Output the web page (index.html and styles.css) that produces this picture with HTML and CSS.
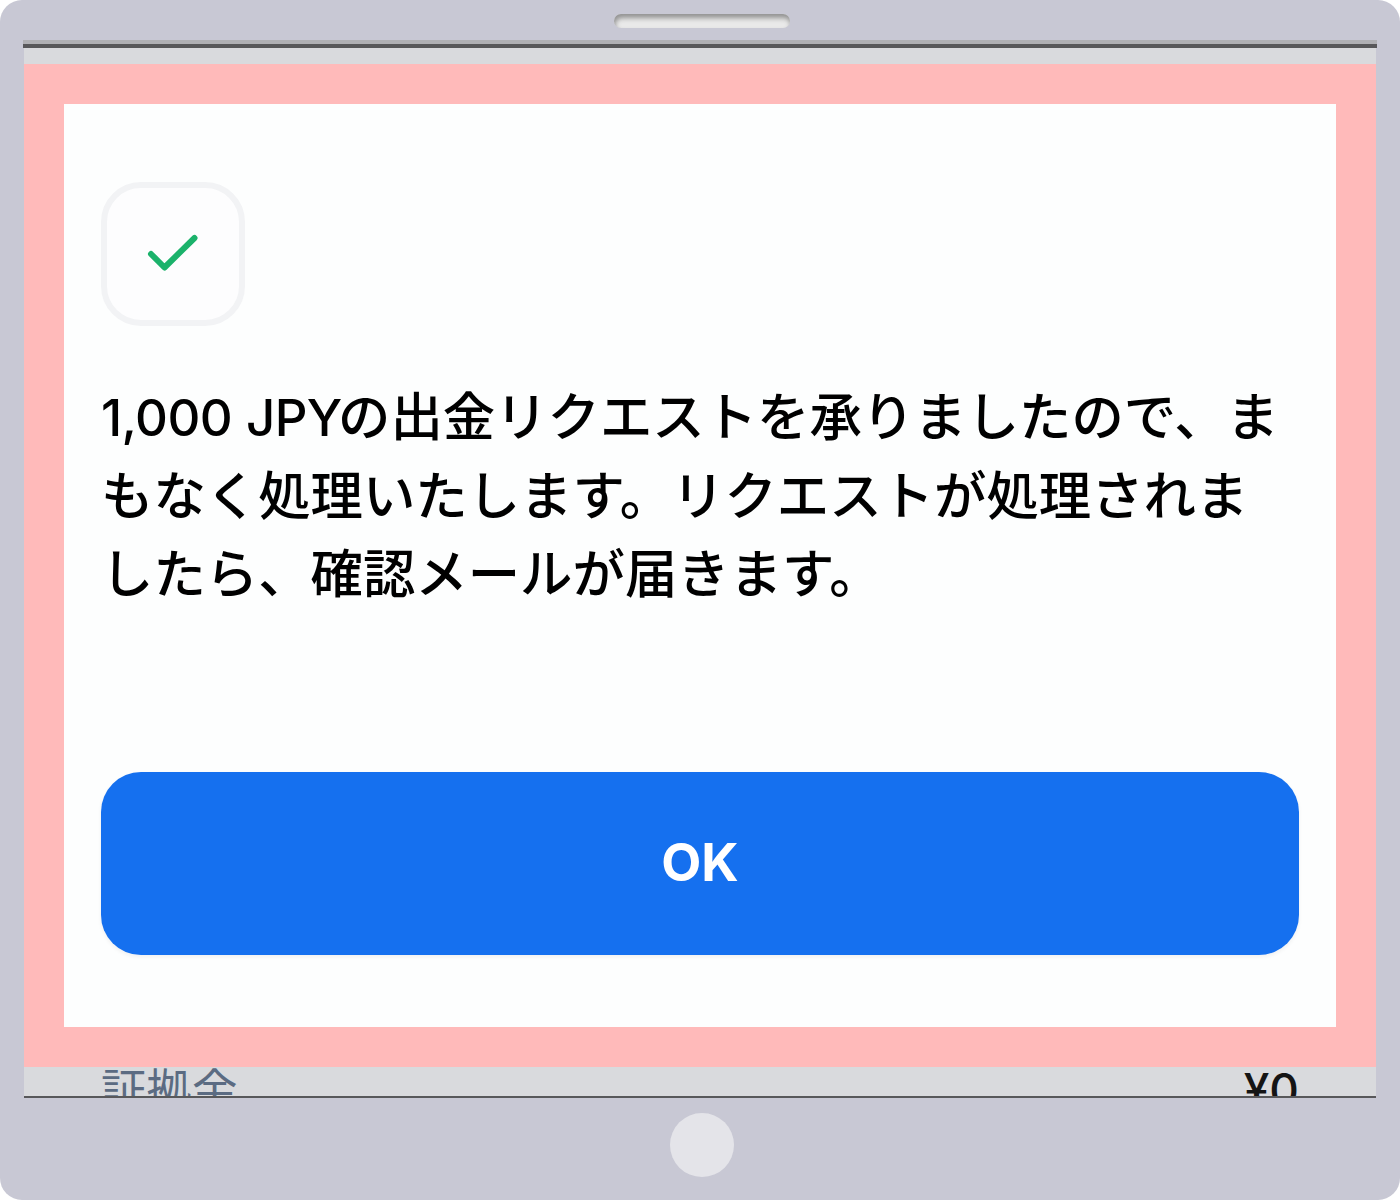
FILE: index.html
```html
<!DOCTYPE html>
<html lang="ja">
<head>
    <meta charset="UTF-8">
    <meta name="viewport" content="width=device-width, initial-scale=1.0">
    <title>出金リクエスト</title>
    <link rel="stylesheet" href="styles.css">
</head>
<body>
    <div class="device">
        <div class="device-top">
            <div class="speaker"></div>
        </div>
        <div class="screen-edge"></div>

        <main class="screen">
            <section class="dialog">
                <div class="status-icon">
                    <svg width="52" height="40" viewBox="0 0 52 40" fill="none" stroke="#1bb26b" stroke-width="6" stroke-linecap="round" stroke-linejoin="round">
                        <path d="M4 20L17.5 33.5L47.5 4"/>
                    </svg>
                </div>
                <p class="message">
                    <span class="line"><span class="amount">1,000</span><span class="currency">JPY</span>の出金リクエストを承りましたので、ま</span>
                    <span class="line">もなく処理いたします。リクエストが処理されま</span>
                    <span class="line">したら、確認メールが届きます。</span>
                </p>
                <button class="ok-button" type="button">OK</button>
            </section>

            <div class="balance-row">
                <span class="balance-label">証拠金</span>
                <span class="balance-value">¥0</span>
            </div>
        </main>

        <div class="device-bottom">
            <div class="home-button"></div>
        </div>
    </div>
</body>
</html>
```

FILE: styles.css
```css
* {
    margin: 0;
    padding: 0;
    box-sizing: border-box;
}

body {
    font-family: "Noto Sans CJK JP", sans-serif;
    background-color: white;
}

.device {
    display: flex;
    flex-direction: column;
    width: 1400px;
    height: 1200px;
    border-radius: 22px;
    background-color: #c8c8d4;
    overflow: hidden;
}

.device-top {
    display: flex;
    justify-content: center;
    height: 40px;
    padding: 14px 0 0 4px;
}

.speaker {
    width: 176px;
    height: 14px;
    border-radius: 7px;
    background-color: #e9e9e9;
    box-shadow: inset 1px 4px 5px #929292;
}

.screen-edge {
    height: 8px;
    margin: 0 23px;
    background-color: #58585a;
    border-top: 4px solid #b0b0b4;
}

.screen {
    height: 1050px;
    margin: 0 24px;
    padding-top: 16px;
    background-color: #d9dadd;
    border-bottom: 2px solid #58585a;
    overflow: hidden;
}

.dialog {
    height: 1003px;
    padding: 78px 37px 0;
    border: 40px solid #ffbaba;
    background-color: #fdfefe;
}

.status-icon {
    display: flex;
    align-items: center;
    justify-content: center;
    width: 144px;
    height: 144px;
    border: 6px solid #f2f3f5;
    border-radius: 40px;
    background-color: #fdfdfe;
}

.message {
    margin-top: 48px;
    font-size: 52.4px;
    font-weight: 500;
    line-height: 78.5px;
    color: #000;
    white-space: nowrap;
}

.line {
    display: block;
    height: 78.5px;
}

.amount,
.currency {
    display: inline-block;
    font-family: Inter, "Open Sans", sans-serif;
    font-size: 51px;
    line-height: 1;
    letter-spacing: -0.6px;
}

.amount {
    width: 145px;
}

.currency {
    width: 92px;
}

.ok-button {
    display: block;
    width: 100%;
    height: 183.5px;
    margin-top: 162px;
    padding-bottom: 2px;
    border: none;
    border-radius: 40px;
    background-color: #1570ef;
    box-shadow: 0 2px 4px rgba(16, 24, 40, 0.06);
    color: white;
    font-family: Inter, "Open Sans", sans-serif;
    font-size: 52px;
    font-weight: 700;
}

.balance-row {
    display: flex;
    justify-content: space-between;
    padding: 0 77px;
}

.balance-label {
    font-size: 45.5px;
    line-height: 40px;
    color: #5b6b82;
}

.balance-value {
    font-family: Inter, "Open Sans", sans-serif;
    font-size: 46px;
    font-weight: 500;
    line-height: 46px;
    color: #141414;
}

.device-bottom {
    display: flex;
    justify-content: center;
    padding: 14.5px 0 0 4px;
}

.home-button {
    width: 64px;
    height: 64px;
    border-radius: 50%;
    background-color: #e4e4e9;
}
```
